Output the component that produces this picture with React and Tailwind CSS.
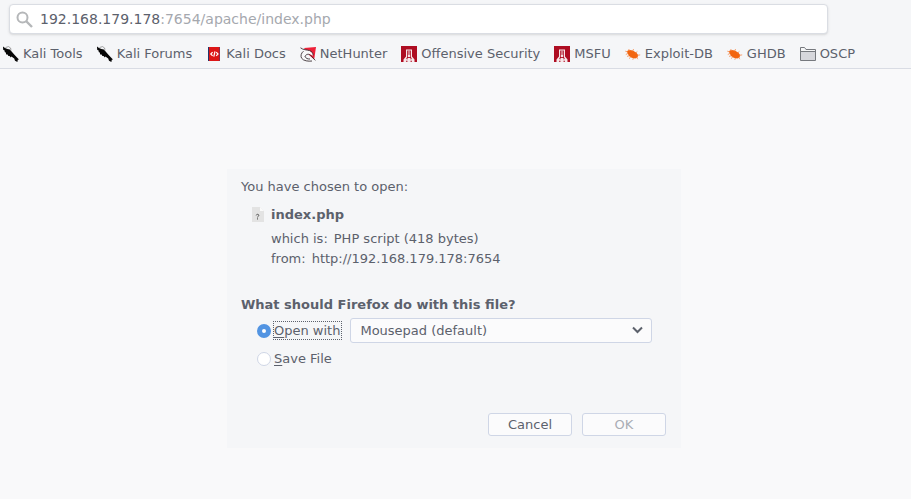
import React from "react";

function KaliIcon() {
  return (
    <svg width="16" height="16" viewBox="0 0 16 16" aria-hidden="true">
      <path d="M0 .6 2 2 4.400 3 6.800 3.400 8.600 5.600 11.200 8.400 14 11.600 16 13.400 14.800 13.800 14.400 16 12 14.800 11.200 12.600 8.400 10.600 7.800 11.400 6.600 10 5.400 10 4.600 8.600 3.200 8.400 2.800 6.600 1.600 6 1.800 4.800.2 3.800Z" fill="#060606" />
      <path d="M2.500 1.500 5.500.6 7.600 2 8 4.500" fill="none" stroke="#6a6a6a" strokeWidth=".6" />
    </svg>
  );
}

function DocsIcon() {
  return (
    <svg width="16" height="16" viewBox="0 0 16 16" aria-hidden="true">
      <path d="M3 1h10v14H3z" fill="#dd1717" />
      <path d="M2 1h1v14H2z" fill="#24356b" />
      <path d="M13 1h1v14h-1z" fill="#8d2a4a" />
      <path d="M6.600 6.200 4.800 8l1.800 1.800M10.200 6.200l1.800 1.800-1.800 1.800M9 5.400 7.800 10.600" fill="none" stroke="#fff" strokeWidth="1.200" />
    </svg>
  );
}

function NetHunterIcon() {
  return (
    <svg width="16" height="16" viewBox="0 0 16 16" aria-hidden="true">
      <path d="M4 2 16 1l-1.800 12.500L9 9Z" fill="#ee2038" />
      <path d="M.6 2 5 3.800l4.500.8 3.300 2.800.2 2.400-3.200-1.600-3 .6L5 10.400l1 2.200 3 1.200 5.500.8-4.500.8-5-.4L1.600 12.500.8 9.400 3 6Z" fill="#f8f8f9" />
      <path d="M.5 1.800C3 4 7 3.800 9.600 4.600c2.400.8 3.600 2.700 3.600 4.800M3.500 5.200C1 7.200.4 10 1.600 12.200c1.800 2.800 7 3.300 10.400 2.800M5 10.400c1.200-2.600 4.400-2.800 5.800-.8l4.500 4.800M5 10.200c.6 2.300 2.800 2.900 5 2.800" fill="none" stroke="#3b3034" strokeWidth=".9" />
    </svg>
  );
}

function OffsecIcon() {
  return (
    <svg width="16" height="16" viewBox="0 0 16 16" aria-hidden="true">
      <path d="M0 0h16v16H0z" fill="#ae0d22" />
      <path d="M5 3.500h6v7l2.500 3V16H11l-1-2-.5 2h-3L6 14l-1 2H2.500v-2.500l2.500-3z" fill="#f6e8ea" />
      <path d="M6.200 4.500h3.600v6.200l1 2.300-1.300.5V12h-3v1.500L5.200 13l1-2.300z" fill="#ae0d22" />
      <path d="M7.500 4.500h1V9h-1z" fill="#f6e8ea" />
      <circle cx="8" cy="10" r="1.200" fill="#f6e8ea" />
    </svg>
  );
}

function ExploitIcon() {
  return (
    <svg width="16" height="16" viewBox="0 0 16 16" aria-hidden="true">
      <path d="M1.800 5.600C2.500 4 5.200 3.400 7.700 4.600l3.500 1.900 2 2.500-.6 2.600-2.400 1-3.600-.8L4 9.900Z" fill="#f2650f" />
      <path d="M3 6 .3 5.200M3 7.400 .8 8.500M5 5 3.600 3M7.600 5.200 8.600 3M10.600 7l1.800-1.600M12.400 9.300l2.800-.4M11.600 11.400l1.200 1.800M8.400 12l-.6 1.800M5.800 11l-1.800 1.600M4 9.800l-2 .6" fill="none" stroke="#f58b4c" strokeWidth=".8" />
    </svg>
  );
}

function FolderIcon() {
  return (
    <svg width="16" height="16" viewBox="0 0 16 16" aria-hidden="true">
      <path d="M.5 14.500v-13h4l1.500 2h9.500v11Z" fill="#d6d7dc" stroke="#76797e" />
      <path d="M1 2h3.200l1.500 2H15v1H1z" fill="#f5f6f7" />
      <path d="M1 5.500h14" stroke="#76797e" />
    </svg>
  );
}

const bookmarks = [
  ["Kali Tools", KaliIcon],
  ["Kali Forums", KaliIcon],
  ["Kali Docs", DocsIcon],
  ["NetHunter", NetHunterIcon],
  ["Offensive Security", OffsecIcon],
  ["MSFU", OffsecIcon],
  ["Exploit-DB", ExploitIcon],
  ["GHDB", ExploitIcon],
  ["OSCP", FolderIcon],
];

function AddressBar() {
  return (
    <form className="mr-[83px] ml-[9px] flex h-[30px] items-center gap-[7px] rounded border border-[#dadde3] bg-white px-[6px] shadow-sm" onSubmit={(e) => e.preventDefault()}>
      <svg width="17" height="17" viewBox="0 0 17 17" fill="none" stroke="#b5b7b9" strokeWidth="2" aria-hidden="true">
        <circle cx="6.500" cy="6.500" r="5" />
        <path d="m10 10 6 6" strokeWidth="2.400" />
      </svg>
      <div className="relative flex-1 text-[14px] leading-[20px]">
        <input aria-label="Address" defaultValue="192.168.179.178:7654/apache/index.php" className="block w-full bg-transparent text-transparent caret-[#5c616c] outline-none" />
        <span className="pointer-events-none absolute inset-0 whitespace-pre text-[#a5a8ae]" aria-hidden="true">
          <span className="text-[#5c616c]">192.168.179.178</span>:7654/apache/index.php
        </span>
      </div>
    </form>
  );
}

function DownloadDialog() {
  return (
    <section role="dialog" aria-label="Opening index.php" className="mx-auto w-full max-w-[454px] bg-[#f5f6f8] pt-[8px] pr-[15px] pb-[12px] pl-[14px]">
      <p>You have chosen to open:</p>
      <div className="mt-[8px] flex gap-[6px] pl-[11px]">
        <svg className="mt-[2px]" width="13" height="16" viewBox="0 0 13 16" aria-hidden="true">
          <path d="M0 0h8l4 4v11H0z" fill="#e3e3e3" />
          <path d="M8 0v4h4z" fill="#fafafa" />
          <path d="M4.200 8.400c.2-1.500 2.700-1.400 2.600 0 0 .9-1.300.9-1.300 2.100M5.500 11.300v1.200" fill="none" stroke="#555" strokeWidth="1" />
        </svg>
        <div>
          <p className="font-bold">index.php</p>
          <dl className="mt-[4px]">
            <div className="flex gap-[6px]"><dt>which is:</dt><dd>PHP script (418 bytes)</dd></div>
            <div className="flex gap-[6px]"><dt>from:</dt><dd>http://192.168.179.178:7654</dd></div>
          </dl>
        </div>
      </div>
      <fieldset className="mt-[26px]">
        <legend className="font-bold">What should Firefox do with this file?</legend>
        <div className="mt-[3px] flex items-center pr-[14px] pl-[16px]">
          <input id="open" type="radio" name="action" defaultChecked className="size-[14px] appearance-none rounded-full border border-[#cfd6e6] bg-white checked:border-[5px] checked:border-[#5294e2]" />
          <label htmlFor="open" className="ml-[2px] border border-dotted border-[#5c616c] pr-px leading-[17px]"><u className="underline-offset-2">O</u>pen with</label>
          <div className="relative ml-[8px] flex-1">
            <select aria-label="Application" className="block h-[25px] w-full appearance-none rounded-[3px] border border-[#cfd6e6] bg-[#fbfbfc] pl-[9px] leading-[20px]">
              <option>Mousepad (default)</option>
            </select>
            <svg className="pointer-events-none absolute top-[8px] right-[9px]" width="11" height="8" viewBox="0 0 11 8" aria-hidden="true">
              <path d="m1 1.500 4.500 4.500L10 1.500" fill="none" stroke="#5c616c" strokeWidth="2" />
            </svg>
          </div>
        </div>
        <div className="mt-[6px] flex items-center pl-[16px]">
          <input id="save" type="radio" name="action" className="size-[14px] appearance-none rounded-full border border-[#cfd6e6] bg-white checked:border-[5px] checked:border-[#5294e2]" />
          <label htmlFor="save" className="ml-[3px]"><u className="underline-offset-2">S</u>ave File</label>
        </div>
      </fieldset>
      <div className="mt-[44px] flex justify-end gap-[10px]">
        <button className="h-[23px] w-[84px] rounded-[3px] border border-[#cfd6e6] bg-[#fbfbfc]">Cancel</button>
        <button disabled className="h-[23px] w-[84px] rounded-[3px] border border-[#cfd6e6] bg-[#fbfbfc] text-[#a9adb5]">OK</button>
      </div>
    </section>
  );
}

export default function App() {
  return (
    <div className="min-h-screen bg-[#f9f9fa] font-['DejaVu_Sans',sans-serif] text-[13px] leading-[20px] text-[#5c616c]">
      <header className="border-b border-[#d9dce4] bg-[#f5f6f8] pt-[4px] pb-[4px]">
        <AddressBar />
        <nav aria-label="Bookmarks" className="mt-[10px] flex gap-[14px] pl-[3px] whitespace-nowrap">
          {bookmarks.map(([name, Icon]) => (
            <a key={name} href="#" className="flex items-center gap-[4px]"><Icon />{name}</a>
          ))}
        </nav>
      </header>
      <main className="pt-[100px] pr-[3px]">
        <DownloadDialog />
      </main>
    </div>
  );
}
